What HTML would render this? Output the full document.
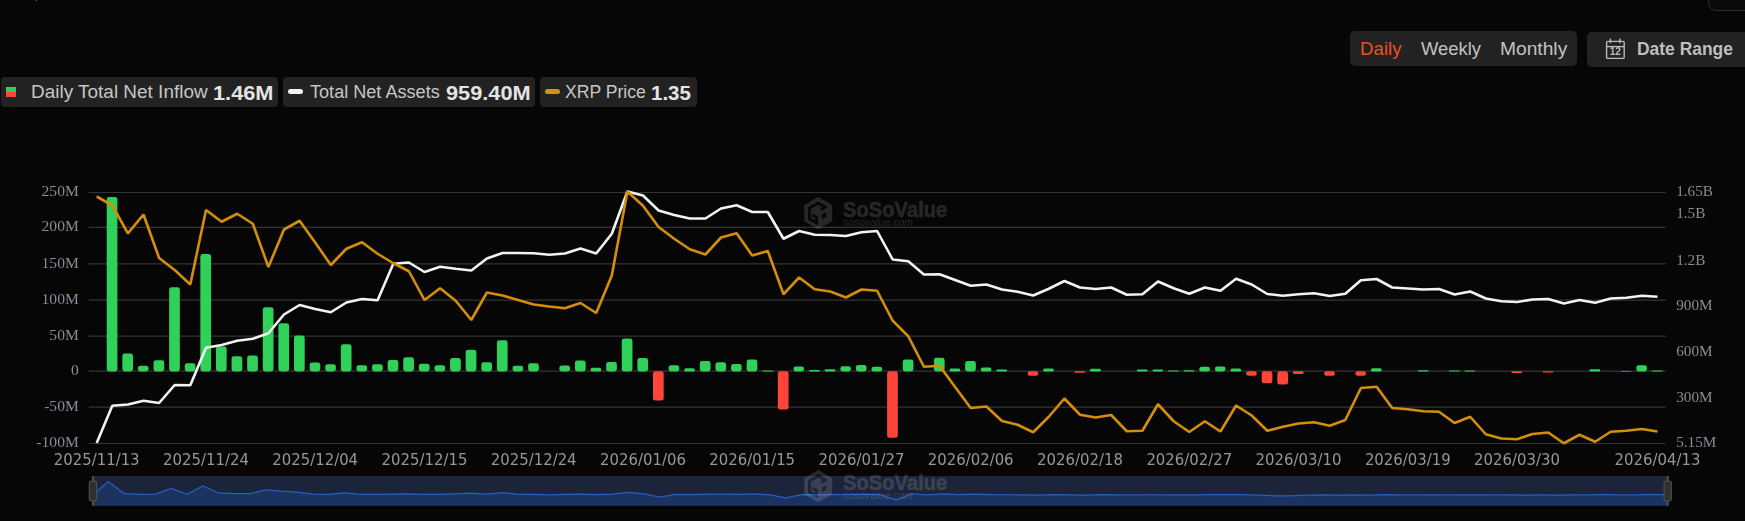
<!DOCTYPE html>
<html lang="en">
<head>
<meta charset="utf-8">
<title>XRP ETF Daily Total Net Inflow</title>
<style>
html,body{margin:0;padding:0;}
body{width:1745px;height:521px;background:#060606;overflow:hidden;position:relative;font-family:"Liberation Sans",sans-serif;}
.chart{position:absolute;left:0;top:0;will-change:transform;}
.dot{position:absolute;left:35.5px;top:0;width:1.5px;height:1.2px;background:#6a6a6a;}
.corner{position:absolute;left:1708px;top:-20px;width:80px;height:31.2px;border:1px solid #2b2b2b;border-radius:8px;background:#0a0a0a;box-sizing:border-box;}
.pill{position:absolute;top:77px;height:30px;background:#222222;border-radius:4px;}
.pill span{position:absolute;white-space:nowrap;line-height:30px;top:0;transform-origin:0 50%;}
.lbl{color:#c6c6c6;font-size:18px;top:-0.3px !important;}
.val{color:#e4e4e4;font-size:21px;font-weight:700;top:0.6px !important;}
.sq{position:absolute;left:5px;top:10px;width:10px;height:10px;background:linear-gradient(#30d158 50%,#ff453a 50%);}
.dash{position:absolute;top:12.2px;height:5px;width:15px;border-radius:2.5px;}
.seg{position:absolute;left:1350px;top:31px;width:227px;height:35px;background:#222222;border-radius:5px;}
.seg span{position:absolute;top:0;line-height:35px;font-size:18.4px;color:#c2c2c2;white-space:nowrap;transform-origin:0 50%;}
.seg span.on{color:#f04e23;}
.range{position:absolute;left:1587px;top:32px;width:200px;height:35px;background:#222222;border-radius:5px;}
.range span{position:absolute;left:50.15px;top:0;line-height:35px;font-size:18.1px;transform:scaleX(0.964);font-weight:700;color:#bebebe;white-space:nowrap;transform-origin:0 50%;}
.range svg{position:absolute;left:17.5px;top:6px;}
</style>
</head>
<body>
<div class="dot"></div>
<div class="corner"></div>
<div class="seg"><span class="on" id="t_daily" style="left:10.1px;transform:scaleX(1.017)">Daily</span><span id="t_weekly" style="left:71px">Weekly</span><span id="t_monthly" style="left:149.8px;transform:scaleX(1.044)">Monthly</span></div>
<div class="range"><svg width="21" height="22" viewBox="0 0 21 22" fill="none" stroke="#b9b9b9" stroke-width="1.4"><rect x="1.6" y="3.4" width="17.6" height="17" rx="1.2"/><line x1="1.6" y1="8.6" x2="19.2" y2="8.6"/><line x1="5.4" y1="0.6" x2="5.4" y2="5.2"/><line x1="14.8" y1="0.6" x2="14.8" y2="5.2"/><text x="10.2" y="17.4" font-family="'Liberation Sans',sans-serif" font-size="10" font-weight="700" fill="#b9b9b9" stroke="none" text-anchor="middle">12</text></svg><span id="t_range">Date Range</span></div>
<div class="pill" style="left:1px;width:277px"><i class="sq"></i><span class="lbl" id="t_l1" style="left:29.5px;transform:scaleX(1.053)">Daily Total Net Inflow</span><span class="val" id="t_v1" style="left:212.3px;transform:scaleX(1.036)">1.46M</span></div>
<div class="pill" style="left:283px;width:252px"><i class="dash" style="left:5.2px;background:#f2f2f2"></i><span class="lbl" id="t_l2" style="left:26.9px;transform:scaleX(1.005)">Total Net Assets</span><span class="val" id="t_v2" style="left:162.8px;transform:scaleX(1.036)">959.40M</span></div>
<div class="pill" style="left:540.3px;width:156.6px"><i class="dash" style="left:4.8px;background:#d8900b"></i><span class="lbl" id="t_l3" style="left:24.8px;transform:scaleX(0.978)">XRP Price</span><span class="val" id="t_v3" style="left:111px;transform:scaleX(0.975)">1.35</span></div>
<svg class="chart" width="1745" height="521" viewBox="0 0 1745 521">
<line x1="88.7" x2="1665.8" y1="192.5" y2="192.5" stroke="#343434" stroke-width="1.2"/>
<line x1="88.7" x2="1665.8" y1="227.4" y2="227.4" stroke="#343434" stroke-width="1.2"/>
<line x1="88.7" x2="1665.8" y1="263.8" y2="263.8" stroke="#343434" stroke-width="1.2"/>
<line x1="88.7" x2="1665.8" y1="300.1" y2="300.1" stroke="#343434" stroke-width="1.2"/>
<line x1="88.7" x2="1665.8" y1="336.2" y2="336.2" stroke="#343434" stroke-width="1.2"/>
<line x1="88.7" x2="1665.8" y1="371.2" y2="371.2" stroke="#343434" stroke-width="1.2"/>
<line x1="88.7" x2="1665.8" y1="407.1" y2="407.1" stroke="#343434" stroke-width="1.2"/>
<line x1="88.7" x2="1665.8" y1="443.5" y2="443.5" stroke="#343434" stroke-width="1.2"/>
<g font-family="'Liberation Serif', serif" font-size="15.6" fill="#8a8c96">
<text x="78.8" y="196.3" text-anchor="end">250M</text>
<text x="78.8" y="231.2" text-anchor="end">200M</text>
<text x="78.8" y="267.6" text-anchor="end">150M</text>
<text x="78.8" y="303.9" text-anchor="end">100M</text>
<text x="78.8" y="340.0" text-anchor="end">50M</text>
<text x="78.8" y="375.0" text-anchor="end">0</text>
<text x="78.8" y="410.9" text-anchor="end">-50M</text>
<text x="78.8" y="447.3" text-anchor="end">-100M</text>
<text x="1676.2" y="196.4" font-size="15.2">1.65B</text>
<text x="1676.2" y="218.4" font-size="15.2">1.5B</text>
<text x="1676.2" y="264.5" font-size="15.2">1.2B</text>
<text x="1676.2" y="310.3" font-size="15.2">900M</text>
<text x="1676.2" y="356.1" font-size="15.2">600M</text>
<text x="1676.2" y="402.0" font-size="15.2">300M</text>
<text x="1676.2" y="446.7" font-size="15.2">5.15M</text>
</g>
<g font-family="'DejaVu Sans', 'Liberation Sans', sans-serif" font-size="15" fill="#979797" text-anchor="middle">
<text x="96.7" y="465" textLength="85.8" lengthAdjust="spacingAndGlyphs">2025/11/13</text>
<text x="206.0" y="465" textLength="85.8" lengthAdjust="spacingAndGlyphs">2025/11/24</text>
<text x="315.2" y="465" textLength="85.8" lengthAdjust="spacingAndGlyphs">2025/12/04</text>
<text x="424.5" y="465" textLength="85.8" lengthAdjust="spacingAndGlyphs">2025/12/15</text>
<text x="533.7" y="465" textLength="85.8" lengthAdjust="spacingAndGlyphs">2025/12/24</text>
<text x="643.0" y="465" textLength="85.8" lengthAdjust="spacingAndGlyphs">2026/01/06</text>
<text x="752.2" y="465" textLength="85.8" lengthAdjust="spacingAndGlyphs">2026/01/15</text>
<text x="861.5" y="465" textLength="85.8" lengthAdjust="spacingAndGlyphs">2026/01/27</text>
<text x="970.7" y="465" textLength="85.8" lengthAdjust="spacingAndGlyphs">2026/02/06</text>
<text x="1080.0" y="465" textLength="85.8" lengthAdjust="spacingAndGlyphs">2026/02/18</text>
<text x="1189.3" y="465" textLength="85.8" lengthAdjust="spacingAndGlyphs">2026/02/27</text>
<text x="1298.5" y="465" textLength="85.8" lengthAdjust="spacingAndGlyphs">2026/03/10</text>
<text x="1407.8" y="465" textLength="85.8" lengthAdjust="spacingAndGlyphs">2026/03/19</text>
<text x="1517.0" y="465" textLength="85.8" lengthAdjust="spacingAndGlyphs">2026/03/30</text>
<text x="1657.5" y="465" textLength="85.8" lengthAdjust="spacingAndGlyphs">2026/04/13</text>
</g>
<defs><mask id="wmask" maskUnits="userSpaceOnUse" x="800" y="190" width="40" height="45"><path d="M818.2 196.8 L832.2 204.9 L832.2 221.2 L818.2 229.3 L804.2 221.2 L804.2 204.9 Z" fill="#fff"/><path d="M821.2 209.5 L825.3 207.1 L818.2 203.0 L809.5 208.0 L809.5 218.7 L816.5 222.8 L816.5 217.4 L812.4 215.0" fill="none" stroke="#000" stroke-width="2.7" stroke-linejoin="miter"/><path d="M822 214.4 L826 212.3 L826 217.1 L822 219.3 Z" fill="#000"/></mask></defs>
<g transform="translate(0,0)" fill="#ffffff" opacity="0.128">
<rect x="800" y="190" width="40" height="45" mask="url(#wmask)"/>
<text x="843" y="216.6" font-family="'Liberation Sans', sans-serif" font-weight="700" font-size="21.5" stroke="#ffffff" stroke-width="0.55" textLength="104.3" lengthAdjust="spacingAndGlyphs">SoSoValue</text>
<text x="843" y="226.3" font-family="'Liberation Sans', sans-serif" font-style="italic" font-size="10" textLength="70" lengthAdjust="spacingAndGlyphs">sosovalue.com</text>
</g>
<rect x="106.71" y="197.00" width="10.7" height="174.50" rx="2.40" fill="#30d158"/>
<rect x="122.32" y="353.50" width="10.7" height="18.00" rx="2.40" fill="#30d158"/>
<rect x="137.92" y="365.75" width="10.7" height="5.75" rx="2.40" fill="#30d158"/>
<rect x="153.53" y="360.25" width="10.7" height="11.25" rx="2.40" fill="#30d158"/>
<rect x="169.14" y="287.25" width="10.7" height="84.25" rx="2.40" fill="#30d158"/>
<rect x="184.75" y="363.25" width="10.7" height="8.25" rx="2.40" fill="#30d158"/>
<rect x="200.36" y="254.00" width="10.7" height="117.50" rx="2.40" fill="#30d158"/>
<rect x="215.96" y="346.50" width="10.7" height="25.00" rx="2.40" fill="#30d158"/>
<rect x="231.57" y="356.25" width="10.7" height="15.25" rx="2.40" fill="#30d158"/>
<rect x="247.18" y="355.50" width="10.7" height="16.00" rx="2.40" fill="#30d158"/>
<rect x="262.79" y="307.25" width="10.7" height="64.25" rx="2.40" fill="#30d158"/>
<rect x="278.40" y="323.25" width="10.7" height="48.25" rx="2.40" fill="#30d158"/>
<rect x="294.00" y="335.50" width="10.7" height="36.00" rx="2.40" fill="#30d158"/>
<rect x="309.61" y="362.50" width="10.7" height="9.00" rx="2.40" fill="#30d158"/>
<rect x="325.22" y="364.25" width="10.7" height="7.25" rx="2.40" fill="#30d158"/>
<rect x="340.83" y="344.25" width="10.7" height="27.25" rx="2.40" fill="#30d158"/>
<rect x="356.44" y="365.25" width="10.7" height="6.25" rx="2.40" fill="#30d158"/>
<rect x="372.04" y="364.25" width="10.7" height="7.25" rx="2.40" fill="#30d158"/>
<rect x="387.65" y="360.00" width="10.7" height="11.50" rx="2.40" fill="#30d158"/>
<rect x="403.26" y="357.25" width="10.7" height="14.25" rx="2.40" fill="#30d158"/>
<rect x="418.87" y="363.75" width="10.7" height="7.75" rx="2.40" fill="#30d158"/>
<rect x="434.48" y="365.25" width="10.7" height="6.25" rx="2.40" fill="#30d158"/>
<rect x="450.08" y="358.00" width="10.7" height="13.50" rx="2.40" fill="#30d158"/>
<rect x="465.69" y="349.75" width="10.7" height="21.75" rx="2.40" fill="#30d158"/>
<rect x="481.30" y="362.25" width="10.7" height="9.25" rx="2.40" fill="#30d158"/>
<rect x="496.91" y="340.25" width="10.7" height="31.25" rx="2.40" fill="#30d158"/>
<rect x="512.52" y="365.75" width="10.7" height="5.75" rx="2.40" fill="#30d158"/>
<rect x="528.12" y="363.25" width="10.7" height="8.25" rx="2.40" fill="#30d158"/>
<rect x="559.34" y="365.50" width="10.7" height="6.00" rx="2.40" fill="#30d158"/>
<rect x="574.95" y="360.50" width="10.7" height="11.00" rx="2.40" fill="#30d158"/>
<rect x="590.56" y="367.75" width="10.7" height="3.75" rx="1.88" fill="#30d158"/>
<rect x="606.16" y="362.00" width="10.7" height="9.50" rx="2.40" fill="#30d158"/>
<rect x="621.77" y="338.50" width="10.7" height="33.00" rx="2.40" fill="#30d158"/>
<rect x="637.38" y="358.00" width="10.7" height="13.50" rx="2.40" fill="#30d158"/>
<rect x="652.99" y="371.30" width="10.7" height="29.25" rx="2.40" fill="#ff453a"/>
<rect x="668.60" y="365.25" width="10.7" height="6.25" rx="2.40" fill="#30d158"/>
<rect x="684.20" y="368.25" width="10.7" height="3.25" rx="1.62" fill="#30d158"/>
<rect x="699.81" y="361.00" width="10.7" height="10.50" rx="2.40" fill="#30d158"/>
<rect x="715.42" y="362.25" width="10.7" height="9.25" rx="2.40" fill="#30d158"/>
<rect x="731.03" y="364.00" width="10.7" height="7.50" rx="2.40" fill="#30d158"/>
<rect x="746.64" y="359.50" width="10.7" height="12.00" rx="2.40" fill="#30d158"/>
<rect x="762.24" y="370.50" width="10.7" height="1.00" rx="0.50" fill="#30d158"/>
<rect x="777.85" y="371.30" width="10.7" height="38.25" rx="2.40" fill="#ff453a"/>
<rect x="793.46" y="366.50" width="10.7" height="5.00" rx="2.40" fill="#30d158"/>
<rect x="809.07" y="370.00" width="10.7" height="1.50" rx="0.75" fill="#30d158"/>
<rect x="824.68" y="369.25" width="10.7" height="2.25" rx="1.12" fill="#30d158"/>
<rect x="840.28" y="366.25" width="10.7" height="5.25" rx="2.40" fill="#30d158"/>
<rect x="855.89" y="365.00" width="10.7" height="6.50" rx="2.40" fill="#30d158"/>
<rect x="871.50" y="366.75" width="10.7" height="4.75" rx="2.38" fill="#30d158"/>
<rect x="887.11" y="371.30" width="10.7" height="66.50" rx="2.40" fill="#ff453a"/>
<rect x="902.72" y="359.50" width="10.7" height="12.00" rx="2.40" fill="#30d158"/>
<rect x="933.93" y="357.75" width="10.7" height="13.75" rx="2.40" fill="#30d158"/>
<rect x="949.54" y="368.50" width="10.7" height="3.00" rx="1.50" fill="#30d158"/>
<rect x="965.15" y="361.00" width="10.7" height="10.50" rx="2.40" fill="#30d158"/>
<rect x="980.76" y="367.50" width="10.7" height="4.00" rx="2.00" fill="#30d158"/>
<rect x="996.36" y="369.50" width="10.7" height="2.00" rx="1.00" fill="#30d158"/>
<rect x="1027.58" y="371.30" width="10.7" height="4.50" rx="2.25" fill="#ff453a"/>
<rect x="1043.19" y="368.50" width="10.7" height="3.00" rx="1.50" fill="#30d158"/>
<rect x="1074.40" y="371.30" width="10.7" height="1.50" rx="0.75" fill="#ff453a"/>
<rect x="1090.01" y="368.75" width="10.7" height="2.75" rx="1.38" fill="#30d158"/>
<rect x="1136.84" y="369.50" width="10.7" height="2.00" rx="1.00" fill="#30d158"/>
<rect x="1152.44" y="369.50" width="10.7" height="2.00" rx="1.00" fill="#30d158"/>
<rect x="1168.05" y="370.50" width="10.7" height="1.00" rx="0.50" fill="#30d158"/>
<rect x="1183.66" y="370.25" width="10.7" height="1.25" rx="0.62" fill="#30d158"/>
<rect x="1199.27" y="366.75" width="10.7" height="4.75" rx="2.38" fill="#30d158"/>
<rect x="1214.88" y="366.50" width="10.7" height="5.00" rx="2.40" fill="#30d158"/>
<rect x="1230.48" y="368.50" width="10.7" height="3.00" rx="1.50" fill="#30d158"/>
<rect x="1246.09" y="371.30" width="10.7" height="4.50" rx="2.25" fill="#ff453a"/>
<rect x="1261.70" y="371.30" width="10.7" height="12.00" rx="2.40" fill="#ff453a"/>
<rect x="1277.31" y="371.30" width="10.7" height="13.25" rx="2.40" fill="#ff453a"/>
<rect x="1292.92" y="371.30" width="10.7" height="2.75" rx="1.38" fill="#ff453a"/>
<rect x="1324.13" y="371.30" width="10.7" height="4.50" rx="2.25" fill="#ff453a"/>
<rect x="1355.35" y="371.30" width="10.7" height="4.50" rx="2.25" fill="#ff453a"/>
<rect x="1370.96" y="368.25" width="10.7" height="3.25" rx="1.62" fill="#30d158"/>
<rect x="1417.78" y="370.25" width="10.7" height="1.25" rx="0.62" fill="#30d158"/>
<rect x="1449.00" y="370.50" width="10.7" height="1.00" rx="0.50" fill="#30d158"/>
<rect x="1464.60" y="370.50" width="10.7" height="1.00" rx="0.50" fill="#30d158"/>
<rect x="1511.43" y="371.30" width="10.7" height="1.75" rx="0.88" fill="#ff453a"/>
<rect x="1542.64" y="371.30" width="10.7" height="1.25" rx="0.62" fill="#ff453a"/>
<rect x="1589.47" y="369.25" width="10.7" height="2.25" rx="1.12" fill="#30d158"/>
<rect x="1620.68" y="371.30" width="10.7" height="0.75" rx="0.38" fill="#ff453a"/>
<rect x="1636.29" y="365.25" width="10.7" height="6.25" rx="2.40" fill="#30d158"/>
<rect x="1651.90" y="370.50" width="10.7" height="1.00" rx="0.50" fill="#30d158"/>
<polyline points="96.7,443 112.3,405.75 127.9,404.5 143.5,400.75 159.1,403 174.7,385 190.3,385.25 206.0,347.75 221.6,345 237.2,340.75 252.8,338.75 268.4,333.25 284.0,314.5 299.6,305 315.2,309 330.8,312.25 346.4,302.5 362.0,299 377.6,300.25 393.3,263.75 408.9,262.5 424.5,272 440.1,266.75 455.7,268.75 471.3,270.5 486.9,258.5 502.5,253 518.1,253 533.7,253.25 549.3,254.75 564.9,253.5 580.5,248.5 596.2,253.5 611.8,233.75 627.4,191.5 643.0,195.5 658.6,210.5 674.2,215 689.8,218.5 705.4,218.5 721.0,208.5 736.6,205.25 752.2,212 767.8,212 783.5,238.75 799.1,231 814.7,234.75 830.3,235 845.9,236 861.5,232.25 877.1,231 892.7,259.5 908.3,261.25 923.9,274.5 939.5,274.25 955.1,280 970.7,285.75 986.4,284.5 1002.0,289.5 1017.6,291.75 1033.2,295.5 1048.8,288.75 1064.4,281 1080.0,287.5 1095.6,289 1111.2,287.5 1126.8,294.75 1142.4,294.25 1158.0,281.5 1173.7,288.25 1189.3,293.75 1204.9,287.5 1220.5,290.75 1236.1,278.75 1251.7,284.5 1267.3,294 1282.9,295.75 1298.5,294.25 1314.1,293.25 1329.7,296 1345.3,293.75 1360.9,280.25 1376.6,279 1392.2,287.5 1407.8,288.5 1423.4,289.5 1439.0,289 1454.6,294.5 1470.2,291.5 1485.8,298.5 1501.4,301.25 1517.0,302 1532.6,299.5 1548.2,299 1563.9,303.5 1579.5,300 1595.1,302.75 1610.7,298.5 1626.3,297.75 1641.9,295.75 1657.5,296.75" fill="none" stroke="#f2f2f2" stroke-width="2.6" stroke-linejoin="bevel" stroke-linecap="butt"/>
<polyline points="96.7,196.5 112.3,205.5 127.9,233.3 143.5,214.5 159.1,258 174.7,270 190.3,284.5 206.0,210 221.6,221.75 237.2,213.75 252.8,223.75 268.4,267 284.0,229.5 299.6,220.75 315.2,242.5 330.8,265 346.4,248.75 362.0,242.25 377.6,253.75 393.3,263.25 408.9,271.25 424.5,300 440.1,288.25 455.7,300.75 471.3,320 486.9,292.5 502.5,295.5 518.1,300 533.7,304.5 549.3,306.5 564.9,308.25 580.5,303 596.2,313 611.8,275.5 627.4,191.5 643.0,205.75 658.6,227 674.2,238.75 689.8,249.25 705.4,254.5 721.0,237.5 736.6,233.25 752.2,255.5 767.8,251 783.5,294.25 799.1,277.5 814.7,289.25 830.3,291.5 845.9,297.5 861.5,289.5 877.1,290.75 892.7,320.75 908.3,336.25 923.9,366.75 939.5,365.75 955.1,387 970.7,408 986.4,406.5 1002.0,421 1017.6,424.75 1033.2,432.25 1048.8,416.75 1064.4,398.5 1080.0,414.75 1095.6,417.5 1111.2,415 1126.8,431.25 1142.4,430.75 1158.0,404.25 1173.7,421.25 1189.3,432 1204.9,421.25 1220.5,431.5 1236.1,405.5 1251.7,415.5 1267.3,430.75 1282.9,426.75 1298.5,423.5 1314.1,422.25 1329.7,425.75 1345.3,420 1360.9,388 1376.6,386.75 1392.2,408 1407.8,409.25 1423.4,411.25 1439.0,411.75 1454.6,423 1470.2,416.75 1485.8,434.25 1501.4,438.5 1517.0,439.25 1532.6,434 1548.2,432.5 1563.9,443.25 1579.5,434.75 1595.1,441.75 1610.7,431.75 1626.3,430.75 1641.9,429 1657.5,431.5" fill="none" stroke="#d48e0a" stroke-width="2.6" stroke-linejoin="bevel" stroke-linecap="butt"/>
<rect x="92.5" y="476" width="1575.5" height="29.69999999999999" fill="#1b243a"/>
<path d="M92.5 494.90 L108.3 481.57 L124.0 493.52 L139.8 494.46 L155.5 494.04 L171.3 488.46 L187.0 494.27 L202.8 485.92 L218.5 492.99 L234.3 493.73 L250.1 493.68 L265.8 489.99 L281.6 491.21 L297.3 492.15 L313.1 494.21 L328.8 494.35 L344.6 492.82 L360.3 494.42 L376.1 494.35 L391.8 494.02 L407.6 493.81 L423.4 494.31 L439.1 494.42 L454.9 493.87 L470.6 493.24 L486.4 494.19 L502.1 492.51 L517.9 494.46 L533.6 494.27 L549.4 494.90 L565.2 494.44 L580.9 494.06 L596.7 494.61 L612.4 494.17 L628.2 492.38 L643.9 493.87 L659.7 497.13 L675.4 494.42 L691.2 494.65 L706.9 494.10 L722.7 494.19 L738.5 494.33 L754.2 493.98 L770.0 494.82 L785.7 497.82 L801.5 494.52 L817.2 494.79 L833.0 494.73 L848.7 494.50 L864.5 494.40 L880.2 494.54 L896.0 499.98 L911.8 493.98 L927.5 494.90 L943.3 493.85 L959.0 494.67 L974.8 494.10 L990.5 494.59 L1006.3 494.75 L1022.0 494.90 L1037.8 495.24 L1053.6 494.67 L1069.3 494.90 L1085.1 495.01 L1100.8 494.69 L1116.6 494.90 L1132.3 494.90 L1148.1 494.75 L1163.8 494.75 L1179.6 494.82 L1195.4 494.80 L1211.1 494.54 L1226.9 494.52 L1242.6 494.67 L1258.4 495.24 L1274.1 495.82 L1289.9 495.91 L1305.6 495.11 L1321.4 494.90 L1337.1 495.24 L1352.9 494.90 L1368.7 495.24 L1384.4 494.65 L1400.2 494.90 L1415.9 494.90 L1431.7 494.80 L1447.4 494.90 L1463.2 494.82 L1478.9 494.82 L1494.7 494.90 L1510.5 494.90 L1526.2 495.03 L1542.0 494.90 L1557.7 495.00 L1573.5 494.90 L1589.2 494.90 L1605.0 494.73 L1620.7 494.90 L1636.5 494.96 L1652.2 494.42 L1668.0 494.82 L1668 505.7 L92.5 505.7 Z" fill="#1c325f"/>
<polyline points="92.5,494.90 108.3,481.57 124.0,493.52 139.8,494.46 155.5,494.04 171.3,488.46 187.0,494.27 202.8,485.92 218.5,492.99 234.3,493.73 250.1,493.68 265.8,489.99 281.6,491.21 297.3,492.15 313.1,494.21 328.8,494.35 344.6,492.82 360.3,494.42 376.1,494.35 391.8,494.02 407.6,493.81 423.4,494.31 439.1,494.42 454.9,493.87 470.6,493.24 486.4,494.19 502.1,492.51 517.9,494.46 533.6,494.27 549.4,494.90 565.2,494.44 580.9,494.06 596.7,494.61 612.4,494.17 628.2,492.38 643.9,493.87 659.7,497.13 675.4,494.42 691.2,494.65 706.9,494.10 722.7,494.19 738.5,494.33 754.2,493.98 770.0,494.82 785.7,497.82 801.5,494.52 817.2,494.79 833.0,494.73 848.7,494.50 864.5,494.40 880.2,494.54 896.0,499.98 911.8,493.98 927.5,494.90 943.3,493.85 959.0,494.67 974.8,494.10 990.5,494.59 1006.3,494.75 1022.0,494.90 1037.8,495.24 1053.6,494.67 1069.3,494.90 1085.1,495.01 1100.8,494.69 1116.6,494.90 1132.3,494.90 1148.1,494.75 1163.8,494.75 1179.6,494.82 1195.4,494.80 1211.1,494.54 1226.9,494.52 1242.6,494.67 1258.4,495.24 1274.1,495.82 1289.9,495.91 1305.6,495.11 1321.4,494.90 1337.1,495.24 1352.9,494.90 1368.7,495.24 1384.4,494.65 1400.2,494.90 1415.9,494.90 1431.7,494.80 1447.4,494.90 1463.2,494.82 1478.9,494.82 1494.7,494.90 1510.5,494.90 1526.2,495.03 1542.0,494.90 1557.7,495.00 1573.5,494.90 1589.2,494.90 1605.0,494.73 1620.7,494.90 1636.5,494.96 1652.2,494.42 1668.0,494.82" fill="none" stroke="#275fbe" stroke-width="1.25"/>
<g transform="translate(0,273)" fill="#ffffff" opacity="0.128">
<rect x="800" y="190" width="40" height="45" mask="url(#wmask)"/>
<text x="843" y="216.6" font-family="'Liberation Sans', sans-serif" font-weight="700" font-size="21.5" stroke="#ffffff" stroke-width="0.55" textLength="104.3" lengthAdjust="spacingAndGlyphs">SoSoValue</text>
<text x="843" y="226.3" font-family="'Liberation Sans', sans-serif" font-style="italic" font-size="10" textLength="70" lengthAdjust="spacingAndGlyphs">sosovalue.com</text>
</g>
<line x1="93.0" x2="93.0" y1="476" y2="505.7" stroke="#4a4a4a" stroke-width="2.4"/>
<rect x="89.4" y="481.2" width="7.2" height="19.6" rx="2" fill="#2f2f2f" stroke="#4a4a4a" stroke-width="1.3"/>
<line x1="1667.7" x2="1667.7" y1="476" y2="505.7" stroke="#4a4a4a" stroke-width="2.4"/>
<rect x="1664.1000000000001" y="481.2" width="7.2" height="19.6" rx="2" fill="#2f2f2f" stroke="#4a4a4a" stroke-width="1.3"/>
</svg>
</body>
</html>
